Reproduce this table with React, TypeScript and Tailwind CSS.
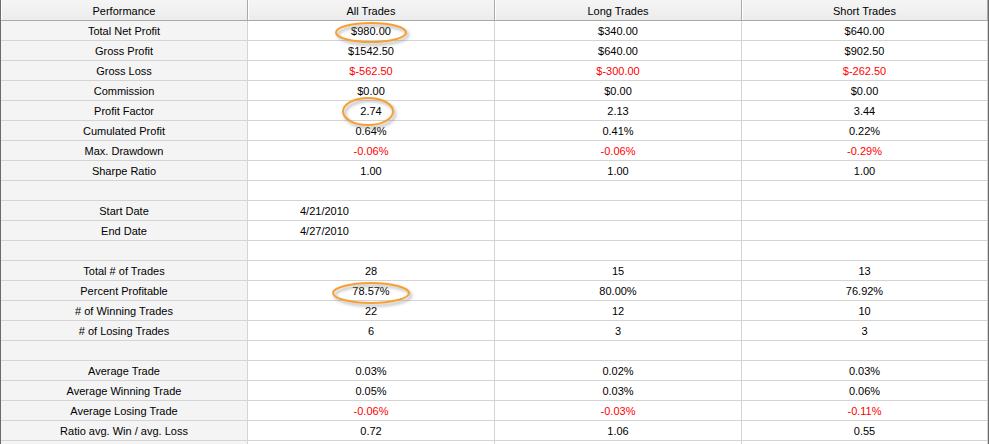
import React from "react";

type Row = { label: string; v: string[]; red?: boolean; date?: boolean };

const rows: Row[] = [
  { label: "Total Net Profit", v: ["$980.00", "$340.00", "$640.00"] },
  { label: "Gross Profit", v: ["$1542.50", "$640.00", "$902.50"] },
  { label: "Gross Loss", v: ["$-562.50", "$-300.00", "$-262.50"], red: true },
  { label: "Commission", v: ["$0.00", "$0.00", "$0.00"] },
  { label: "Profit Factor", v: ["2.74", "2.13", "3.44"] },
  { label: "Cumulated Profit", v: ["0.64%", "0.41%", "0.22%"] },
  { label: "Max. Drawdown", v: ["-0.06%", "-0.06%", "-0.29%"], red: true },
  { label: "Sharpe Ratio", v: ["1.00", "1.00", "1.00"] },
  { label: "", v: ["", "", ""] },
  { label: "Start Date", v: ["4/21/2010", "", ""], date: true },
  { label: "End Date", v: ["4/27/2010", "", ""], date: true },
  { label: "", v: ["", "", ""] },
  { label: "Total # of Trades", v: ["28", "15", "13"] },
  { label: "Percent Profitable", v: ["78.57%", "80.00%", "76.92%"] },
  { label: "# of Winning Trades", v: ["22", "12", "10"] },
  { label: "# of Losing Trades", v: ["6", "3", "3"] },
  { label: "", v: ["", "", ""] },
  { label: "Average Trade", v: ["0.03%", "0.02%", "0.03%"] },
  { label: "Average Winning Trade", v: ["0.05%", "0.03%", "0.06%"] },
  { label: "Average Losing Trade", v: ["-0.06%", "-0.03%", "-0.11%"], red: true },
  { label: "Ratio avg. Win / avg. Loss", v: ["0.72", "1.06", "0.55"] },
  { label: "", v: ["", "", ""] },
];

const headers = ["Performance", "All Trades", "Long Trades", "Short Trades"];

function Ellipse({ cx, cy, rx, ry }: { cx: number; cy: number; rx: number; ry: number }) {
  const pad = 8;
  const w = rx * 2 + pad * 2;
  const h = ry * 2 + pad * 2;
  const id = `s${cx}_${cy}`;
  return (
    <svg
      className="absolute pointer-events-none"
      style={{ left: cx - rx - pad, top: cy - ry - pad }}
      width={w}
      height={h}
    >
      <defs>
        <filter id={id} x="-20%" y="-50%" width="140%" height="200%">
          <feGaussianBlur stdDeviation="1.5" />
        </filter>
      </defs>
      <ellipse
        cx={rx + pad + 2}
        cy={ry + pad + 2.5}
        rx={rx}
        ry={ry}
        fill="none"
        stroke="#8a8a8a"
        strokeOpacity="0.55"
        strokeWidth="2.5"
        filter={`url(#${id})`}
      />
      <ellipse cx={rx + pad} cy={ry + pad} rx={rx} ry={ry} fill="none" stroke="#f7a032" strokeWidth="2" />
    </svg>
  );
}

export default function App() {
  return (
    <div
      className="relative w-[989px] h-[444px] overflow-hidden bg-white border-l border-r border-[#6b6b6b] text-[11px] text-black"
      style={{ fontFamily: '"Liberation Sans", Arial, sans-serif' }}
    >
      <div className="grid grid-cols-[247px_247px_247px_1fr]">
        {headers.map((h) => (
          <div
            key={h}
            className="h-[21px] pt-[2px] flex items-center justify-center bg-gradient-to-b from-[#f5f5f5] to-[#ececec] border-b border-b-[#a9a9a9] border-r border-r-[#a9a9a9] shadow-[inset_1px_0_0_#ffffff]"
          >
            {h}
          </div>
        ))}
        {rows.map((r, ri) => (
          <React.Fragment key={ri}>
            <div className="h-[20px] pt-[2px] flex items-center justify-center bg-[#f4f4f4] border-b border-r border-[#d4d4d4]">
              {r.label}
            </div>
            {r.v.map((v, ci) => (
              <div
                key={ci}
                className={
                  "h-[20px] pt-[2px] flex items-center border-b border-r border-[#d4d4d4] " +
                  (r.date ? "justify-start pl-[52px] " : "justify-center ") +
                  (r.red ? "text-[#ff0000]" : "")
                }
              >
                {v}
              </div>
            ))}
          </React.Fragment>
        ))}
      </div>
      <Ellipse cx={370} cy={32} rx={35} ry={9.5} />
      <Ellipse cx={367} cy={111} rx={25} ry={13.5} />
      <Ellipse cx={370} cy={293} rx={38} ry={10} />
    </div>
  );
}
